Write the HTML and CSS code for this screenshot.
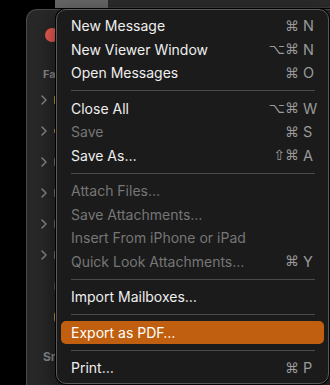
FILE: index.html
```html
<!DOCTYPE html>
<html lang="en">
<head>
    <meta charset="UTF-8">
    <meta name="viewport" content="width=device-width, initial-scale=1.0">
    <title>Mail - File menu</title>
    <link rel="stylesheet" href="styles.css">
</head>
<body>
    <div class="topbar">
        <span class="tb-left"></span>
        <span class="tb-tab"></span>
        <span class="tb-rest"></span>
    </div>

    <div class="window">
        <aside class="sidebar">
            <div class="lights"><span class="light red"></span></div>
            <div class="section">Favourites</div>
            <ul class="folders">
                <li><svg class="chev" viewBox="0 0 6 10"><path d="M1 1l4 4-4 4"/></svg><span class="ficon gold"></span></li>
                <li><svg class="chev" viewBox="0 0 6 10"><path d="M1 1l4 4-4 4"/></svg><span class="ficon gold small"></span></li>
                <li><svg class="chev" viewBox="0 0 6 10"><path d="M1 1l4 4-4 4"/></svg><span class="ficon"></span></li>
                <li><svg class="chev" viewBox="0 0 6 10"><path d="M1 1l4 4-4 4"/></svg><span class="ficon"></span></li>
                <li><svg class="chev" viewBox="0 0 6 10"><path d="M1 1l4 4-4 4"/></svg><span class="ficon"></span></li>
                <li><svg class="chev" viewBox="0 0 6 10"><path d="M1 1l4 4-4 4"/></svg><span class="ficon"></span></li>
                <li><span class="chev-space"></span><span class="ficon grey"></span></li>
                <li><span class="chev-space"></span><span class="ficon gold"></span></li>
            </ul>
            <div class="section smart">Smart Mailboxes</div>
        </aside>
    </div>

    <!-- File menu, dropped over the Mail window -->
    <div class="menu">
        <div class="item"><span class="label">New Message</span><span class="mods">⌘</span><span class="key">N</span></div>
        <div class="item"><span class="label">New Viewer Window</span><span class="mods">⌥⌘</span><span class="key">N</span></div>
        <div class="item"><span class="label">Open Messages</span><span class="mods">⌘</span><span class="key">O</span></div>
        <div class="sep"></div>
        <div class="item"><span class="label">Close All</span><span class="mods">⌥⌘</span><span class="key">W</span></div>
        <div class="item disabled"><span class="label">Save</span><span class="mods">⌘</span><span class="key">S</span></div>
        <div class="item"><span class="label">Save As…</span><span class="mods">⇧⌘</span><span class="key">A</span></div>
        <div class="sep"></div>
        <div class="item disabled"><span class="label">Attach Files…</span></div>
        <div class="item disabled"><span class="label">Save Attachments…</span></div>
        <div class="item disabled"><span class="label">Insert From iPhone or iPad</span></div>
        <div class="item disabled"><span class="label">Quick Look Attachments…</span><span class="mods">⌘</span><span class="key">Y</span></div>
        <div class="sep"></div>
        <div class="item"><span class="label">Import Mailboxes…</span></div>
        <div class="sep"></div>
        <div class="item active"><span class="label">Export as PDF…</span></div>
        <div class="sep"></div>
        <div class="item"><span class="label">Print…</span><span class="mods">⌘</span><span class="key">P</span></div>
    </div>
</body>
</html>
```

FILE: styles.css
```css
:root {
    --menu-bg: #1b1b1b;
    --menu-border: #5a5a5a;
    --text: #efefef;
    --text-off: #767676;
    --shortcut: #9a9a9a;
    --accent: #c05f0f;
    --sidebar-bg: #282828;
}

* {
    margin: 0;
    padding: 0;
    box-sizing: border-box;
}

body {
    background: #000;
    font-family: 'Inter', 'Liberation Sans', sans-serif;
    height: 385px;
    overflow: hidden;
}

/* Top strip */
.topbar {
    display: flex;
    height: 8px;
}

.tb-left {
    width: 55px;
    background: #000;
}

.tb-tab {
    width: 53px;
    background: #676767;
}

.tb-rest {
    flex: 1;
    background: #2b2b2b;
    border-bottom: 1px solid #3a3a3a;
}

/* Mail window behind */
.window {
    margin: 1px 0 0 26px;
    height: 376px;
    background: var(--sidebar-bg);
    border: 1px solid #4a4a4a;
    border-right: none;
    border-bottom: none;
    border-radius: 11px 0 0 0;
}

/* only the strip left of the menu shows */
.sidebar {
    width: 30px;
    overflow: hidden;
    padding-top: 18px;
    color: #8a8a8a;
}

.lights {
    height: 14px;
    padding-left: 18px;
}

.light {
    display: block;
    width: 14px;
    height: 14px;
    border-radius: 50%;
}

.light.red {
    background: #ef5b54;
}

.section {
    margin: 24px 0 0 16px;
    line-height: 16px;
    font-size: 11px;
    font-weight: 700;
    white-space: nowrap;
}

.section.smart {
    margin-top: 17px;
    font-size: 12px;
}

.folders {
    list-style: none;
    margin-top: 2px;
}

.folders li {
    display: flex;
    align-items: center;
    height: 31px;
    padding-left: 14px;
}

.chev {
    flex: none;
    width: 6px;
    height: 10px;
    fill: none;
    stroke: #8c8c8c;
    stroke-width: 1.4;
    stroke-linecap: round;
    stroke-linejoin: round;
}

.chev-space {
    flex: none;
    width: 6px;
}

.ficon {
    flex: none;
    width: 12px;
    height: 10px;
    margin-left: 7px;
    border: 1.5px solid #777;
    border-radius: 2px;
}

.ficon.gold {
    border-color: #c99a2e;
}

.ficon.small {
    height: 6px;
}

.ficon.grey {
    border-color: #555;
}

/* Menu */
.menu {
    position: absolute;
    left: 56px;
    top: 9px;
    width: 273px;
    height: 375px;
    background: var(--menu-bg);
    border: 1px solid var(--menu-border);
    border-radius: 10px;
    padding: 4px;
    box-shadow: 0 0 0 1px #000, 0 8px 24px rgba(0, 0, 0, 0.6);
}

.item {
    display: flex;
    align-items: center;
    height: 23.5px;
    padding: 0 8px 0 10px;
    border-radius: 5px;
    font-size: 14px;
    color: var(--text);
    white-space: nowrap;
}

.item .label {
    flex: 1;
}

.item.disabled .label {
    color: var(--text-off);
}

.item.active {
    background: var(--accent);
}

.item.active .label {
    color: #fff;
}

.mods {
    margin-right: 4px;
    font-family: 'DejaVu Sans', sans-serif;
    font-size: 14px;
    color: var(--shortcut);
}

.key {
    width: 13px;
    font-size: 14.5px;
    color: var(--shortcut);
}

.sep {
    height: 12px;
    margin: 0 9px 0 10px;
    display: flex;
    align-items: center;
}

.sep::after {
    content: '';
    flex: 1;
    height: 1px;
    background: #4b4b4b;
}
```
